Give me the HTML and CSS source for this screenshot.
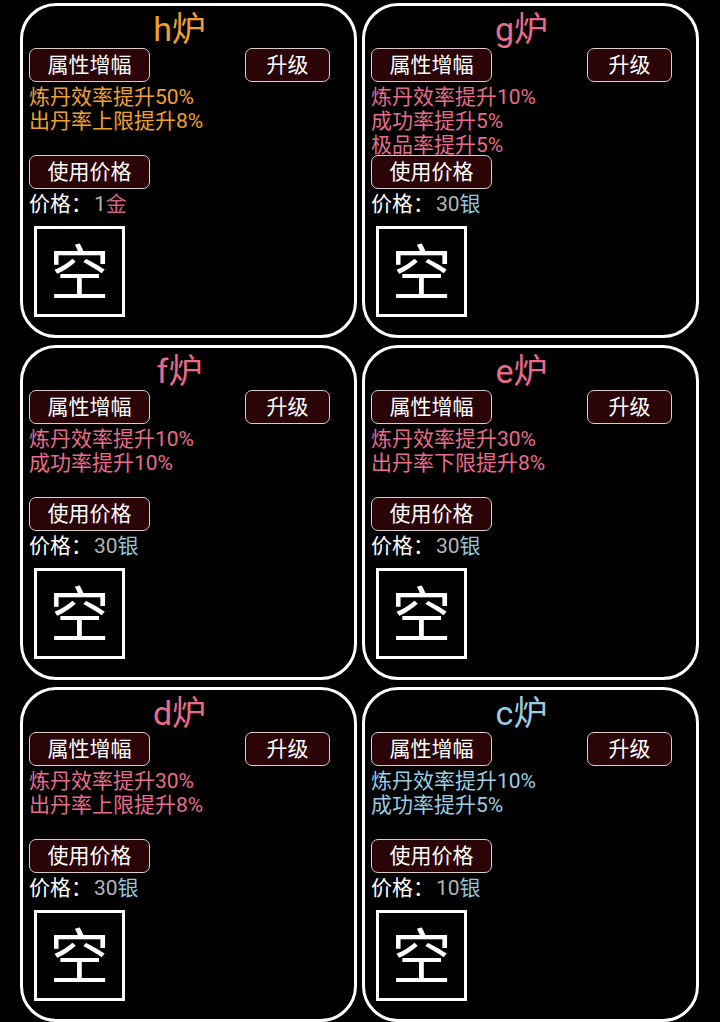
FILE: index.html
```html
<!DOCTYPE html>
<html lang="zh-CN">
<head>
    <meta charset="UTF-8">
    <meta name="viewport" content="width=device-width, initial-scale=1.0">
    <title>丹炉</title>
    <link rel="stylesheet" href="styles.css">
</head>
<body>
    <div class="grid">
        <div class="card orange">
            <div class="title">h炉</div>
            <div class="btn-row">
                <div class="btn wide">属性增幅</div>
                <div class="btn narrow">升级</div>
            </div>
            <div class="attrs">
                <div>炼丹效率提升50%</div>
                <div>出丹率上限提升8%</div>
            </div>
            <div class="btn wide">使用价格</div>
            <div class="price">价格：<span class="num">1</span><span class="gold">金</span></div>
            <div class="slot">空</div>
        </div>
        <div class="card pink">
            <div class="title">g炉</div>
            <div class="btn-row">
                <div class="btn wide">属性增幅</div>
                <div class="btn narrow">升级</div>
            </div>
            <div class="attrs">
                <div>炼丹效率提升10%</div>
                <div>成功率提升5%</div>
                <div>极品率提升5%</div>
            </div>
            <div class="btn wide">使用价格</div>
            <div class="price">价格：<span class="num">30</span><span class="silver">银</span></div>
            <div class="slot">空</div>
        </div>
        <div class="card pink">
            <div class="title">f炉</div>
            <div class="btn-row">
                <div class="btn wide">属性增幅</div>
                <div class="btn narrow">升级</div>
            </div>
            <div class="attrs">
                <div>炼丹效率提升10%</div>
                <div>成功率提升10%</div>
            </div>
            <div class="btn wide">使用价格</div>
            <div class="price">价格：<span class="num">30</span><span class="silver">银</span></div>
            <div class="slot">空</div>
        </div>
        <div class="card pink">
            <div class="title">e炉</div>
            <div class="btn-row">
                <div class="btn wide">属性增幅</div>
                <div class="btn narrow">升级</div>
            </div>
            <div class="attrs">
                <div>炼丹效率提升30%</div>
                <div>出丹率下限提升8%</div>
            </div>
            <div class="btn wide">使用价格</div>
            <div class="price">价格：<span class="num">30</span><span class="silver">银</span></div>
            <div class="slot">空</div>
        </div>
        <div class="card pink">
            <div class="title">d炉</div>
            <div class="btn-row">
                <div class="btn wide">属性增幅</div>
                <div class="btn narrow">升级</div>
            </div>
            <div class="attrs">
                <div>炼丹效率提升30%</div>
                <div>出丹率上限提升8%</div>
            </div>
            <div class="btn wide">使用价格</div>
            <div class="price">价格：<span class="num">30</span><span class="silver">银</span></div>
            <div class="slot">空</div>
        </div>
        <div class="card blue">
            <div class="title">c炉</div>
            <div class="btn-row">
                <div class="btn wide">属性增幅</div>
                <div class="btn narrow">升级</div>
            </div>
            <div class="attrs">
                <div>炼丹效率提升10%</div>
                <div>成功率提升5%</div>
            </div>
            <div class="btn wide">使用价格</div>
            <div class="price">价格：<span class="num">10</span><span class="silver">银</span></div>
            <div class="slot">空</div>
        </div>
    </div>
</body>
</html>
```

FILE: styles.css
```css
html, body {
    margin: 0;
    background-color: #000;
}
body {
    font-family: Roboto, "Noto Sans CJK SC", sans-serif;
    color: #fff;
    height: 1022px;
    overflow: hidden;
}
.grid {
    display: grid;
    grid-template-columns: 337px 337px;
    grid-auto-rows: 335px;
    column-gap: 5px;
    row-gap: 7px;
    padding: 3px 0 0 20px;
}
.card {
    border: 3px solid #fff;
    border-radius: 36px;
    padding: 4px 24px 0 6px;
    box-sizing: border-box;
    display: flex;
    flex-direction: column;
    align-items: flex-start;
}
.title {
    align-self: stretch;
    height: 38px;
    font-size: 34px;
    line-height: 39px;
    text-align: center;
}
.btn-row {
    align-self: stretch;
    display: flex;
    justify-content: space-between;
}
.btn {
    height: 34px;
    box-sizing: border-box;
    border: 1.5px solid #d8cccc;
    border-radius: 7px;
    background-color: #2a0406;
    color: #fff;
    font-size: 21px;
    line-height: 33px;
    text-align: center;
}
.wide {
    width: 121px;
}
.narrow {
    width: 85px;
}
.attrs {
    height: 73px;
    padding-top: 3px;
    box-sizing: border-box;
    font-size: 21px;
    line-height: 24px;
}
.orange .title, .orange .attrs {
    color: #f0a030;
}
.pink .title, .pink .attrs {
    color: #e86c8a;
}
.blue .title, .blue .attrs {
    color: #9ccce2;
}
.price {
    font-size: 21px;
    line-height: 24px;
    margin-top: 3px;
}
.num {
    color: #b4b4b4;
    margin-left: 2px;
}
.gold {
    color: #d0607e;
}
.silver {
    color: #8ec4de;
}
.slot {
    width: 91px;
    height: 91px;
    box-sizing: border-box;
    border: 3px solid #fff;
    margin: 10px 0 0 5px;
    font-size: 60px;
    line-height: 92px;
    text-align: center;
}
```
